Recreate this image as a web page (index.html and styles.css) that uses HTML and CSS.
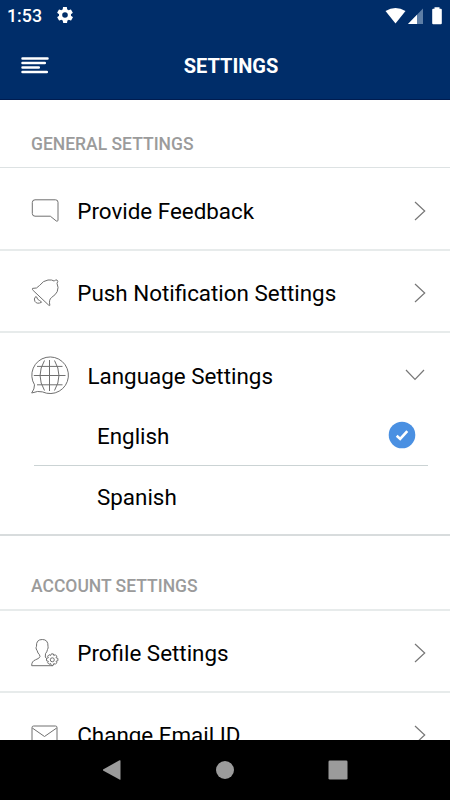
FILE: index.html
```html
<!DOCTYPE html>
<html lang="en">
<head>
<meta charset="utf-8">
<title>Settings</title>
<link rel="stylesheet" href="styles.css">
</head>
<body>
<div class="screen">
  <header class="top">
    <div class="status">
      <span class="clock">1:53</span>
      <svg class="gear" viewBox="2 2 20 20"><path fill="#fff" fill-rule="evenodd" d="M19.4 13c.1-.3.1-.6.1-1s0-.7-.1-1l2.1-1.600c.2-.2.2-.4.1-.6l-2-3.500c-.1-.2-.4-.3-.6-.2l-2.500 1c-.5-.4-1.100-.7-1.700-1l-.4-2.600c0-.3-.2-.5-.4-.5h-4c-.2 0-.4.2-.5.4l-.4 2.700c-.6.2-1.100.6-1.700 1l-2.500-1c-.2-.1-.4 0-.6.2l-2 3.500c-.1.2 0 .4.2.6L4.600 11c-.1.300-.1.700-.1 1s0 .7.1 1l-2.100 1.600c-.2.200-.2.400-.1.600l2 3.500c.1.200.4.300.6.200l2.500-1c.5.400 1.100.7 1.700 1l.4 2.600c0 .3.200.5.500.5h4c.200 0 .400-.2.500-.4l.4-2.700c.6-.2 1.100-.6 1.700-1l2.500 1c.200.1.400 0 .6-.2l2-3.500c.1-.2.1-.4-.1-.6L19.400 13zM12 15.500a3.500 3.500 0 1 1 0-7 3.500 3.500 0 0 1 0 7z"/></svg>
      <span class="spacer"></span>
      <svg class="signals" viewBox="0 0 60 20" fill="#fff">
        <path d="M.5 5Q10.500-1.200 20.500 5L10.500 17.500z"/>
        <path d="M38 2.500V18H23z" fill="#5d7ea6"/>
        <path d="M32 8.700V18H23z"/>
        <path d="M49.500 1.200h5v1.500h1.300q1 0 1 1v13.500q0 1-1 1h-7.600q-1 0-1-1V3.700q0-1 1-1h1.300z"/>
      </svg>
    </div>
    <div class="bar">
      <svg class="menu" viewBox="0 0 28 18" stroke="#fff" stroke-width="2.500" stroke-linecap="round"><path d="M1.500 2.500h25M1.500 7h22.300M1.500 11.400h16.300M1.500 15.900h24.300"/></svg>
      <h1>SETTINGS</h1>
    </div>
  </header>
  <main>
    <h2 class="first">GENERAL SETTINGS</h2>
    <div class="row">
      <svg class="icon" viewBox="0 0 28 28"><path d="M4 2.800H24.500Q27 2.800 27 5.300V23.200Q26.700 24.800 25.300 24L19.300 19.200H4Q1.300 19.200 1.300 16.500V5.500Q1.300 2.800 4 2.800z"/></svg>
      <span class="label">Provide Feedback</span>
      <svg class="chev" viewBox="0 0 12 20"><path d="M1 1l9.700 9L1 19"/></svg>
    </div>
    <div class="row">
      <svg class="icon" viewBox="0 0 28 28"><path d="M1.500 9.400Q6 10 8.500 6.500Q12.300 1.500 17 1Q21 .5 23.300 2.100Q24.200 .4 26 1Q27.600 2.300 26 4.300Q28 8.500 26.200 12.700Q24.500 16 20.500 18.500Q17.500 21 18.900 26.300Q18.200 27 17.200 25.700L2.200 11.500Q1 10.300 1.500 9.400zM4.700 17.500Q2.300 20 4 22.500Q6 25.500 10.500 23.300Q9.800 21.800 8.500 21.500Q6 20.500 5.700 18Z"/></svg>
      <span class="label">Push Notification Settings</span>
      <svg class="chev" viewBox="0 0 12 20"><path d="M1 1l9.700 9L1 19"/></svg>
    </div>
    <div class="language">
      <div class="row open">
        <svg class="globe" viewBox="0 0 39 39"><path d="M4.500 28.800A18.300 18.300 0 1 1 12.500 35.900Q8 34.500 1.700 37Q4.600 33 4.500 28.800zM19.500 4V35M3.800 19.500H35.500M7 10.400H32.500M7 28.800H32.500M14.500 4.500Q5.600 19.500 14.500 34.500M24.500 4.500Q33.400 19.500 24.500 34.500"/></svg>
        <span class="label">Language Settings</span>
        <svg class="down" viewBox="0 0 20 12"><path d="M1 1l9 9.500L19 1"/></svg>
      </div>
      <div class="option"><span class="label">English</span>
        <svg class="check" viewBox="0 0 28 28"><circle cx="14" cy="14" r="13.300" fill="#4a90e2"/><path d="M8.700 14.700L12.200 18L19.300 10.200" fill="none" stroke="#fff" stroke-width="2.600"/></svg>
      </div>
      <div class="option last"><span class="label">Spanish</span></div>
    </div>
    <h2>ACCOUNT SETTINGS</h2>
    <div class="row">
      <svg class="icon" viewBox="0 0 28 28"><path d="M22 26.700H.7Q.5 22.300 4.500 20.800Q8.600 19.500 9 17.500Q8.800 15.500 7 14Q6.300 11.500 5.200 10Q4.800 8.500 5.500 7.300Q5 .5 11.300 .5Q17.200 .5 17 7.300Q17.500 9 16.500 10.500Q16 13 14.500 14.700L14.300 18L15.500 19.500"/><circle cx="21.300" cy="20.800" r="2"/><path d="M20.300 14.900h2l.5 1.600 1.500-.8 1.500 1.500-.8 1.500 1.900.7v2.300l-1.900.600.8 1.500-1.500 1.500-1.500-.8-.6 1.900h-2l-.6-1.900-1.500.8-1.500-1.500.8-1.500-1.900-.6v-2.300l1.900-.700-.8-1.500 1.500-1.500 1.500.8z"/></svg>
      <span class="label">Profile Settings</span>
      <svg class="chev" viewBox="0 0 12 20"><path d="M1 1l9.700 9L1 19"/></svg>
    </div>
    <div class="row">
      <svg class="icon" viewBox="0 0 28 28"><path d="M2.700 5H24.500Q26 5 26 6.500V24H1V6.500Q1 5 2.700 5zM1.300 7L13.500 15.500L25.700 7"/></svg>
      <span class="label">Change Email ID</span>
      <svg class="chev" viewBox="0 0 12 20"><path d="M1 1l9.700 9L1 19"/></svg>
    </div>
  </main>
  <nav>
    <svg viewBox="0 0 20 20"><path d="M18.500.500V19.500Q18.300 20 17.500 19.600L1 10.500V9.500L17.500.3z"/></svg>
    <svg viewBox="0 0 20 20"><circle cx="10" cy="10" r="9"/></svg>
    <svg viewBox="0 0 20 20"><rect x=".500" y=".500" width="19" height="19" rx="1.300"/></svg>
  </nav>
</div>
</body>
</html>
```
FILE: styles.css
```css
* { box-sizing: border-box; }
body { margin: 0; background: #fff; font-family: Roboto, sans-serif; color: #000; }
svg { display: block; flex: none; }
.screen { height: 800px; width: 450px; display: flex; flex-direction: column; overflow: hidden; }
.top { height: 100px; flex: none; background: #002d69; border-bottom: 1px solid #001c50; color: #fff; }
.status { height: 31px; display: flex; align-items: center; padding: 0 7px 0 7px; }
.clock { font-size: 17.8px; line-height: 20px; font-weight: 500; width: 50px; }
.gear { width: 16px; height: 16px; margin-top: -1px; }
.spacer { flex: 1; }
.signals { width: 60px; height: 20px; margin: 5px -2px 5px 0; }
.bar { height: 68px; display: grid; grid-template-columns: 60px 1fr 60px; align-items: center; }
.menu { width: 28px; height: 18px; margin-left: 20.5px; }
h1 { margin: 1px 0 0 12px; font-size: 20px; line-height: 24px; font-weight: 700; text-align: center; }
main { flex: 1; min-height: 0; overflow: hidden; }
h2 { margin: 0; height: 75px; padding: 39px 31px 0; border-bottom: 2px solid #e7ebeb; color: #9b9b9b; font-size: 17.5px; line-height: 22px; font-weight: 500; }
h2.first { height: 68px; padding-top: 33px; border-bottom-width: 1px; border-color: #dde2e3; margin-bottom: 1px; }
.row { height: 82px; display: flex; align-items: center; padding: 4px 24px 0 31px; border-bottom: 2px solid #e7ebeb; }
.label { flex: 1; font-size: 22.4px; line-height: 28px; white-space: nowrap; margin-top: 0; }
.icon { width: 28px; height: 28px; margin-right: 18.3px; }
.icon path, .icon circle, .globe path { fill: none; stroke: #707070; stroke-width: 1; stroke-linejoin: round; }
.chev { width: 12px; height: 20px; }
.chev path, .down path { fill: none; stroke: #777; stroke-width: 1.2; }
.language { height: 203px; border-bottom: 2px solid #d8dcdd; }
.row.open { height: 73px; padding: 11px 25px 0 30px; border: 0; }
.open .label { margin-top: 1px; }
.globe { width: 39px; height: 39px; margin-right: 18.5px; }
.down { width: 20px; height: 12px; }
.option { height: 60px; margin: 0 22px 0 34px; padding: 0 12px 0 63px; display: flex; align-items: center; border-bottom: 1px solid #cbd3d4; }
.option .label { margin: 0; }
.option.last { border: 0; height: 62px; }
.check { width: 28px; height: 28px; margin-top: -1px; }
nav { height: 60px; flex: none; background: #000; display: flex; justify-content: center; align-items: center; gap: 93px; }
nav svg { width: 20px; height: 20px; fill: #9b9b9b; }
```
